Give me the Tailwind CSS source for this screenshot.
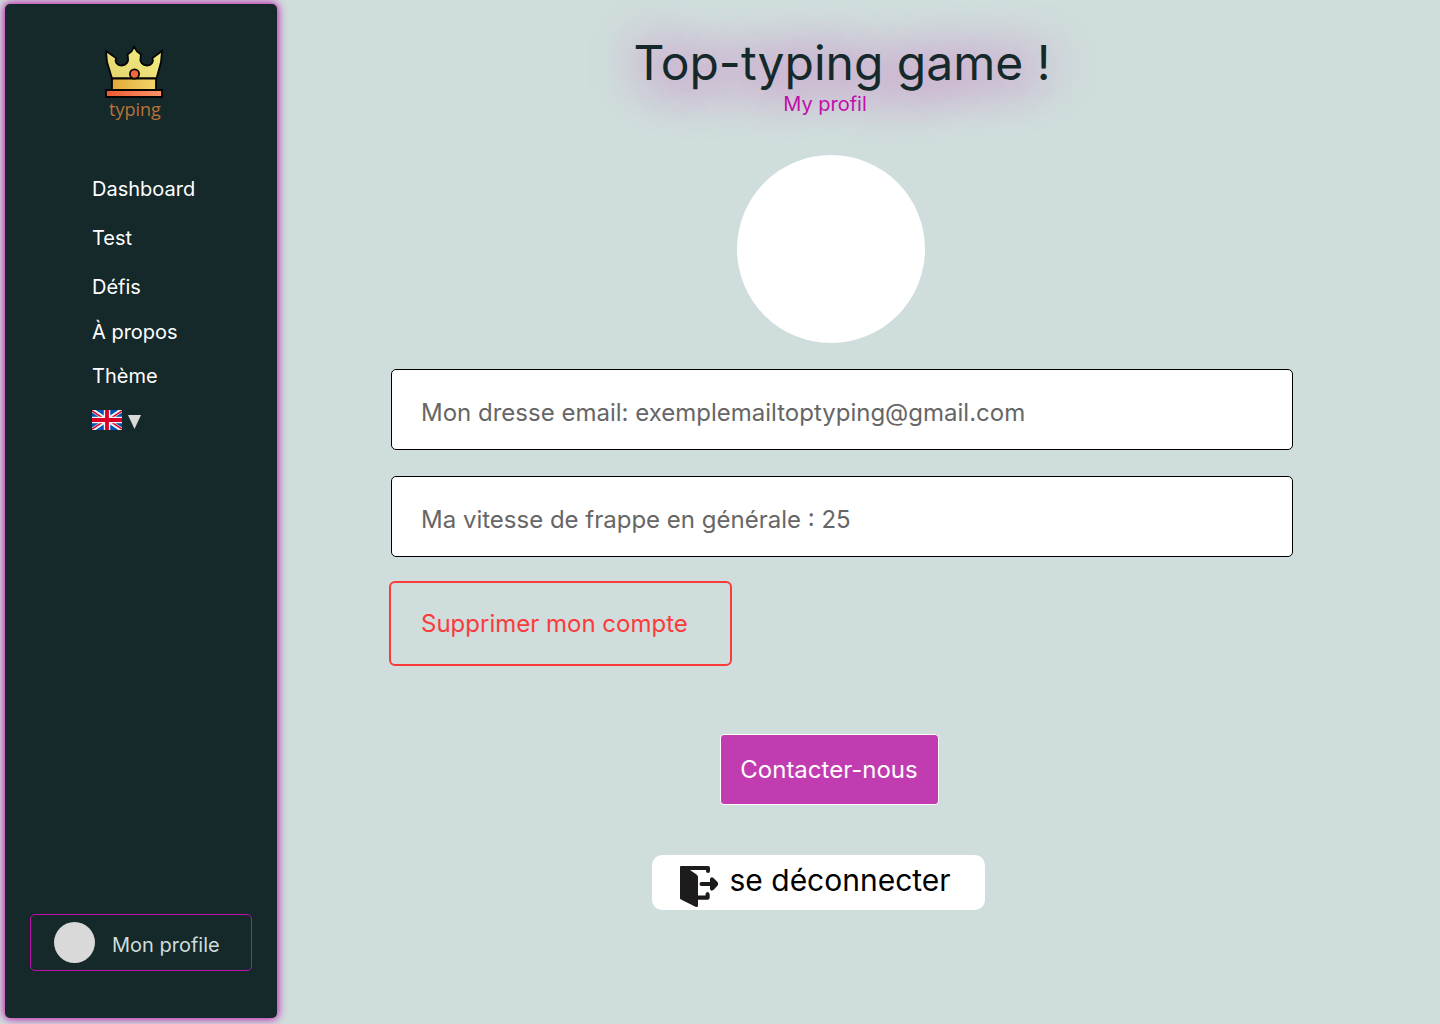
<!DOCTYPE html>
<html lang="fr">
<head>
<meta charset="utf-8">
<meta name="viewport" content="width=device-width, initial-scale=1">
<title>Top-typing game</title>
<script src="https://cdn.jsdelivr.net/npm/@tailwindcss/browser@4"></script>
</head>
<body class="flex min-h-screen bg-[#cfdddc] font-['Inter',sans-serif] font-normal">
  <aside class="mt-1 mb-1.5 ml-[5px] flex w-[272px] shrink-0 flex-col rounded-[5px] bg-[#15282a] pt-10 pb-[47px] shadow-[0_0_8px_1px_#c00fa9]">
    <a href="#" aria-label="Typing" class="ml-[99px] block w-16">
      <svg viewBox="0 0 64 78" class="h-[78px] w-16" role="img" aria-label="typing">
        <defs>
          <linearGradient id="gold" x1="1" y1="0" x2="0" y2="1"><stop offset="0" stop-color="#f7ef86"/><stop offset="1" stop-color="#e2d46c"/></linearGradient>
          <linearGradient id="band" x1="0" y1="0" x2="1" y2="0"><stop offset="0" stop-color="#e5a936"/><stop offset="1" stop-color="#f3d56c"/></linearGradient>
          <linearGradient id="base" x1="0" y1="0" x2="1" y2="0"><stop offset="0" stop-color="#ec5a30"/><stop offset="1" stop-color="#ff9468"/></linearGradient>
        </defs>
        <g stroke="#050505" stroke-width="1.8">
          <path fill="url(#gold)" d="M2 7 12 14C10.500 18 13 21.500 17.500 21.500S25 18 24 13.500L23.500 10.500 27.500 7.500 30 2.800 33 7.500 37 10.500 36.500 13.500C35.500 18 38.500 21.500 43 21.500S50 18 48.500 14L58 7 57 18 52.500 34.500H8L3 18Z"/>
          <path fill="url(#band)" d="M8 34.500H52V46H8Z"/>
          <path fill="url(#base)" d="M2 46H58V53H2Z"/>
          <circle cx="30.500" cy="30" r="4.600" fill="#f4673d"/>
        </g>
        <text x="5" y="72" font-family="Open Sans, sans-serif" font-size="18" font-weight="400" fill="#b87335">typing</text>
      </svg>
    </a>
    <nav class="mt-[55px] ml-[87px] flex flex-col items-start gap-5 text-xl leading-6 text-white">
      <a href="#" class="mb-[5px]">Dashboard</a>
      <a href="#" class="mb-[5px]">Test</a>
      <a href="#" class="mb-px">Défis</a>
      <a href="#">À propos</a>
      <a href="#">Thème</a>
      <button type="button" aria-label="Langue" class="flex h-6 items-center gap-1.5">
        <svg viewBox="0 0 30 20" class="h-5 w-[30px]">
          <path fill="#0052b4" d="M0 0H30V20H0Z"/>
          <path stroke="#f0f0f0" stroke-width="4" d="M0 0 30 20M30 0 0 20"/>
          <path stroke="#d80027" stroke-width="1.500" d="M0 .8 12 8.800M30 .8 18 8.800M0 19.200 12 11.200M30 19.200 18 11.200"/>
          <path stroke="#f0f0f0" stroke-width="6.500" d="M15 0V20M0 10H30"/>
          <path stroke="#d80027" stroke-width="3.800" d="M15 0V20M0 10H30"/>
        </svg>
        <svg viewBox="0 0 13 14" class="mt-1 h-3.5 w-[13px]"><path fill="#d9d9d9" d="M0 0H13L6.500 14Z"/></svg>
      </button>
    </nav>
    <a href="#" class="mx-[25px] mt-auto flex h-[57px] items-center gap-[17px] rounded-[5px] border border-[#c00fa9] pl-[23px] text-xl leading-6 text-[#cfdddc]">
      <span class="size-[41px] rounded-full bg-[#d9d9d9]"></span>
      <span class="pt-1">Mon profile</span>
    </a>
  </aside>

  <main class="flex min-w-0 flex-1 flex-col items-center pt-[34px] pr-[147px] pb-[34px] pl-[114px]">
    <h1 class="text-5xl leading-[58px] font-normal text-[#15282a] [text-shadow:0_4px_50px_#c00fa9]">Top-typing game !</h1>
    <p class="relative pr-[34px] text-xl leading-6 text-[#c00fa9]">My profil</p>
    <div class="mt-[39px] pr-[22px]"><div class="size-[188px] rounded-full bg-white"></div></div>
    <form class="mt-[26px] flex w-full flex-col gap-[26px]">
      <input type="text" aria-label="Adresse email" value="Mon dresse email: exemplemailtoptyping@gmail.com" class="h-[81px] w-full rounded-[5px] border border-black bg-white px-[29px] pt-1.5 text-2xl text-[#666]">
      <input type="text" aria-label="Vitesse de frappe" value="Ma vitesse de frappe en générale : 25" class="h-[81px] w-full rounded-[5px] border border-black bg-white px-[29px] pt-1.5 text-2xl text-[#666]">
    </form>
    <button type="button" class="mt-6 -ml-0.5 h-[85px] w-[343px] self-start rounded-[6px] border-2 border-[#fb3b3b] pl-[30px] text-left text-2xl text-[#fb3b3b]">Supprimer mon compte</button>
    <div class="mt-[68px] pr-[26px]"><button type="button" class="h-[71px] w-[219px] rounded-[4px] border border-white bg-[#c13cb0] text-2xl text-white">Contacter-nous</button></div>
    <div class="mt-[50px] pr-12">
      <button type="button" class="flex h-[55px] w-[333px] gap-3 rounded-[10px] bg-white pt-[7px] pl-7 text-[30px] leading-9 text-black">
        <svg viewBox="0 0 38 42" class="mt-1 h-[42px] w-[38px]" fill="none" stroke="#1d1b1b" stroke-width="4" stroke-linecap="round" stroke-linejoin="round">
          <path fill="#1d1b1b" stroke="none" d="M0 1Q0 0 1 0H28Q30 0 30 2V5Q30 7 28 7T26 5V4H10L16.500 8.500Q18 9.500 18 11V29.500H25.500V28.500Q25.500 26 27.500 26T29.700 28.500V31.500Q29.700 33.700 27.500 33.700H18V39.500Q18 41.500 16 41L1 33.500Q0 33 0 32Z"/>
          <path d="M21.500 18H34"/>
          <path fill="#1d1b1b" stroke="none" d="M30 13Q31 10 34 12.500L38 16.500Q38.600 18 38 19L34 23.500Q31 26 30 23Z"/>
        </svg>
        <span>se déconnecter</span>
      </button>
    </div>
  </main>
</body>
</html>
